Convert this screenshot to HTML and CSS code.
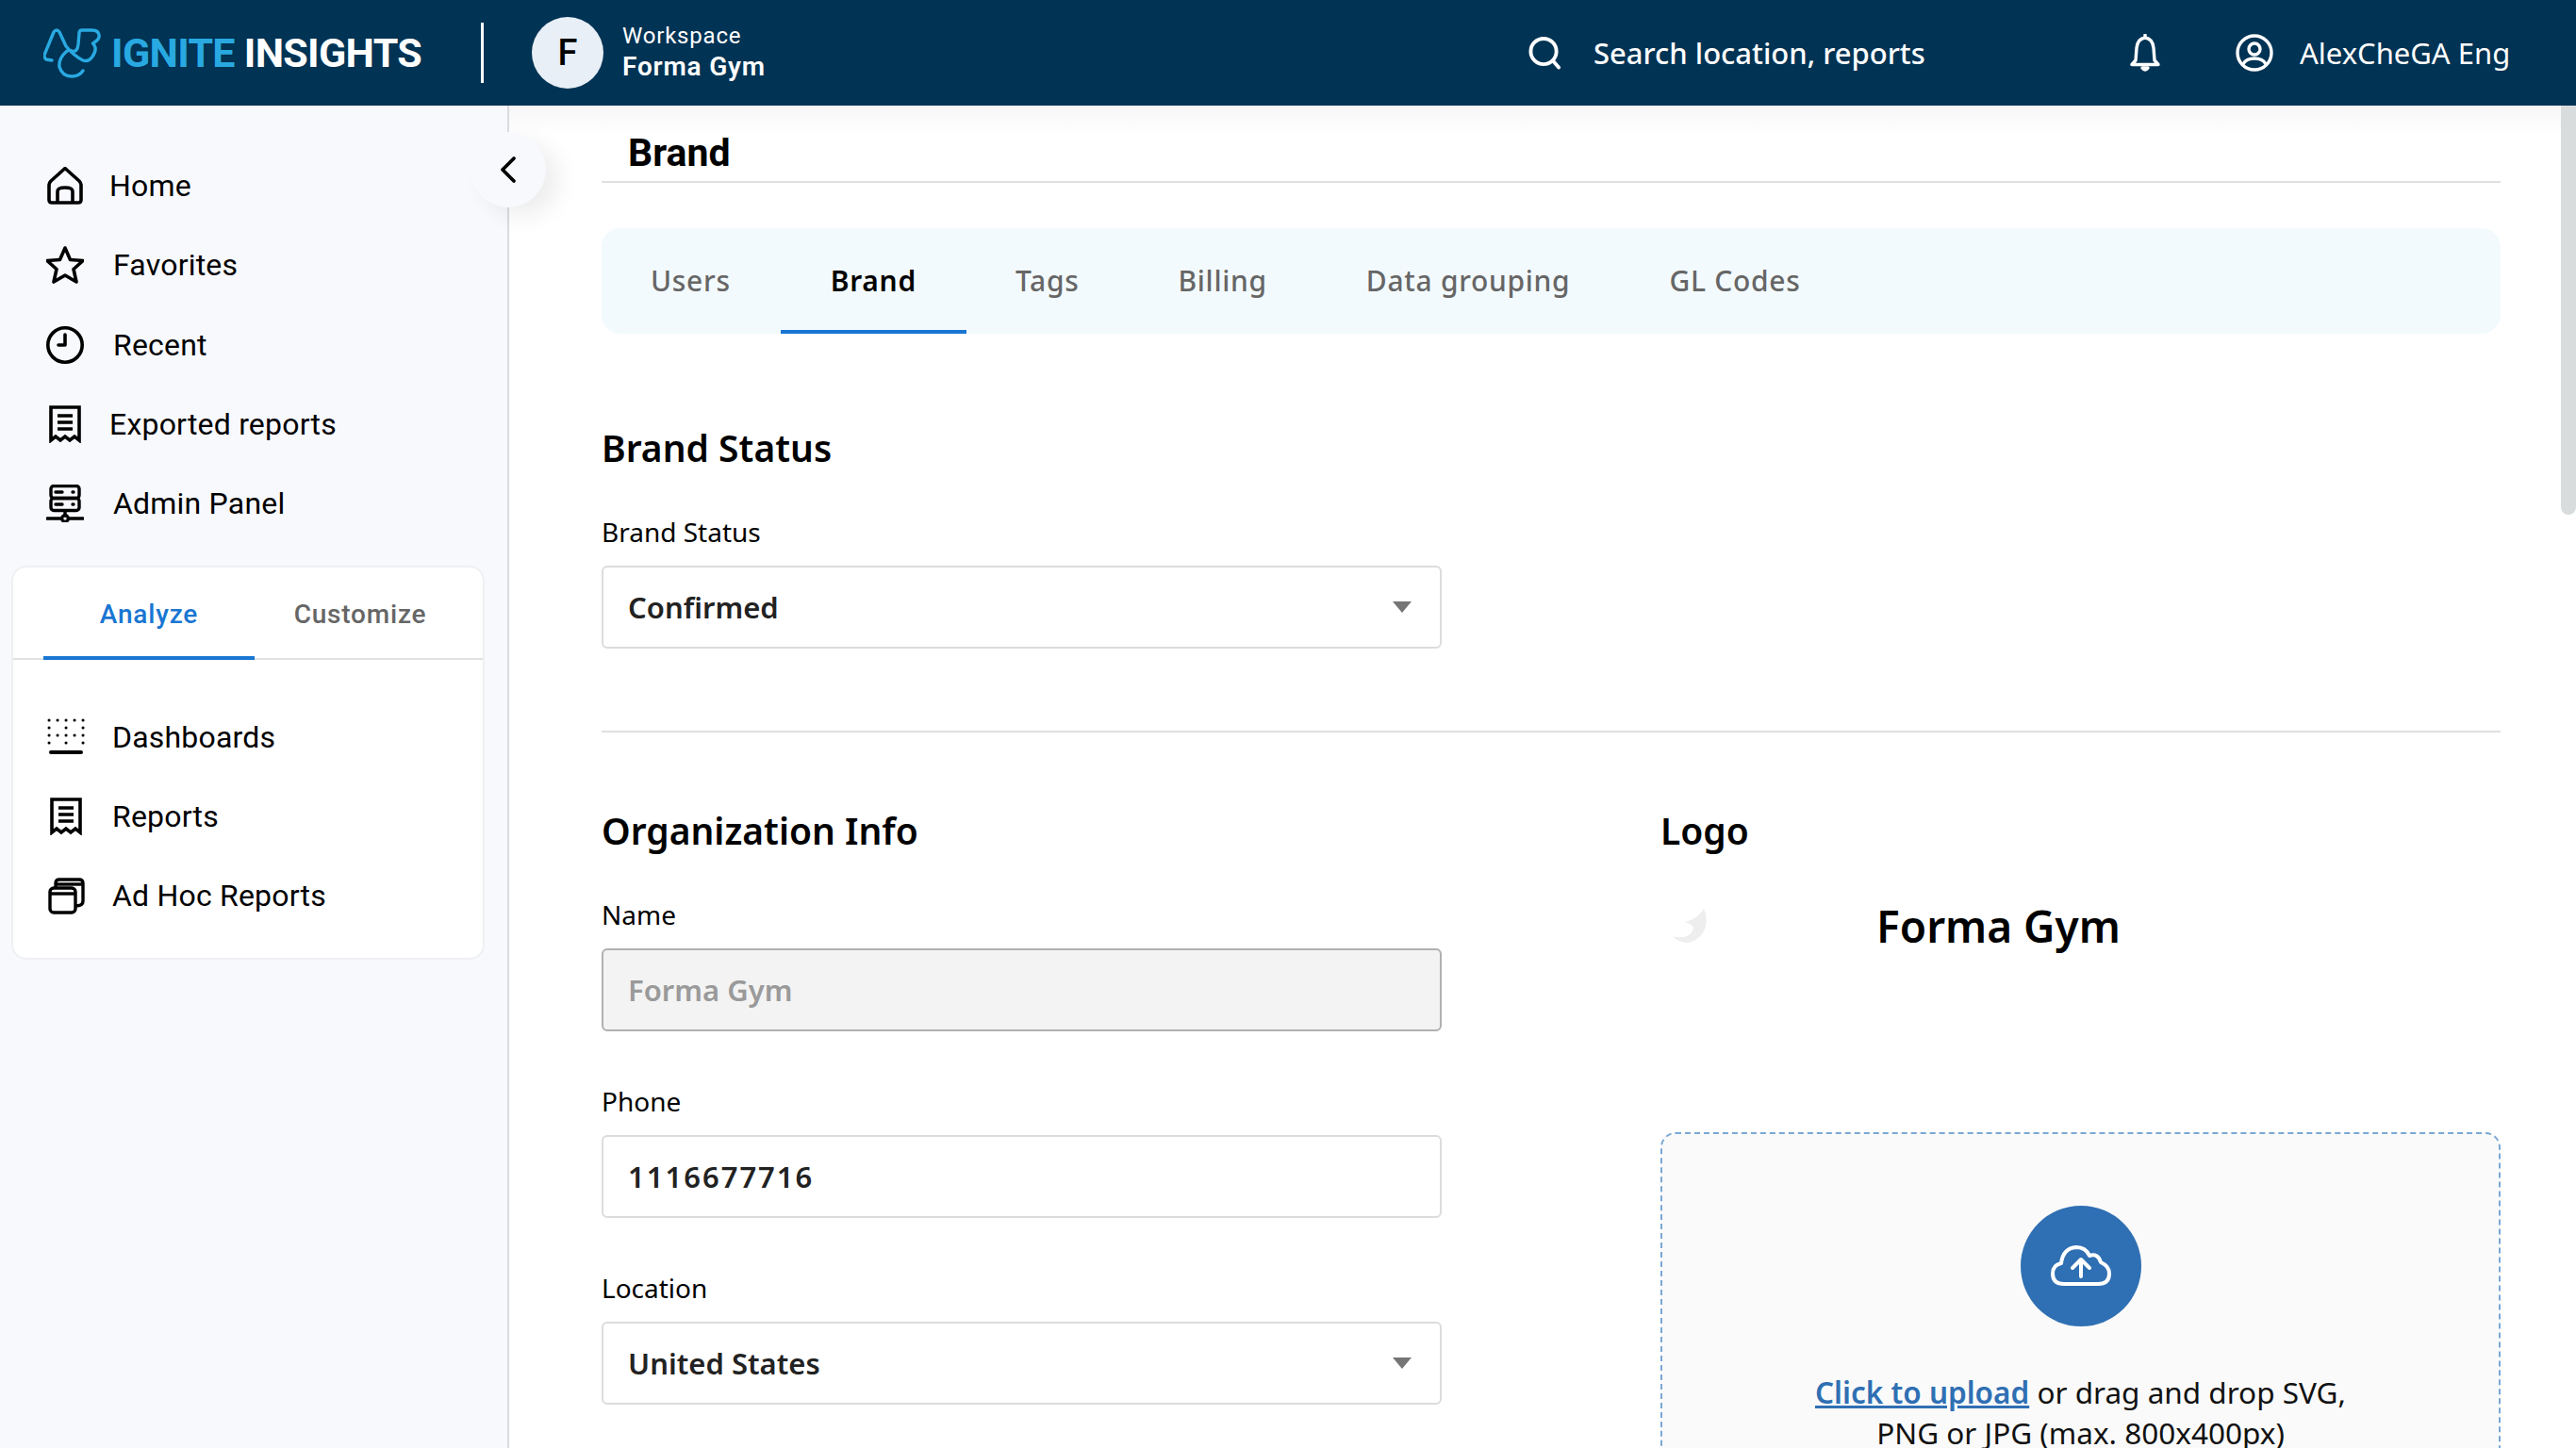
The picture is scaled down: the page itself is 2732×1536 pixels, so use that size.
FILE: index.html
```html
<!DOCTYPE html>
<html>
<head>
    <meta charset="utf-8" />
    <title>Brand</title>
    <link rel="stylesheet" href="styles.css">
</head>
<body>
    <header class="topbar">
        <div class="brand-logo">
            <svg class="logo-mark" viewBox="0 0 62 54" fill="none" stroke="#29a9e1" stroke-width="3.4" stroke-linecap="round" stroke-linejoin="round">
                <path d="M9 35 L3 34 Q0 32 1.5 28 L11 5 Q14 1 17 5 L24 20 Q32 30 42 35 Q48 37 52 31 Q57 24 54 19 L52.5 17 Q60 13 59 8 Q58 3 52 3 L41 3 Q38 3 38 6 L37 18 Q36 27 30 25 Q27 23 24 26 Q16 33 17 42 Q20 52 30 52 Q38 52 42 46"/>
            </svg>
            <span class="logo-text"><span class="logo-blue">IGNITE</span> INSIGHTS</span>
        </div>
        <div class="topbar-divider"></div>
        <div class="workspace">
            <div class="avatar">F</div>
            <div class="workspace-text">
                <div class="workspace-label">Workspace</div>
                <div class="workspace-name">Forma Gym</div>
            </div>
        </div>
        <div class="search">
            <svg class="search-icon" viewBox="0 0 36 36" fill="none" stroke="#fff" stroke-width="4" stroke-linecap="round">
                <circle cx="16.5" cy="16.5" r="14"/>
                <path d="M27 27 L33 34"/>
            </svg>
            <span>Search location, reports</span>
        </div>
        <svg class="bell-icon" viewBox="0 0 34 40" fill="none" stroke="#fff" stroke-width="3.4" stroke-linejoin="round">
            <path d="M17 4 Q9 5 8 15 L7 28 L3 32.5 L31 32.5 L27 28 L26 15 Q25 5 17 4 Z"/>
            <path d="M17 1 L17 4" stroke-linecap="round"/>
            <path d="M14 36 Q17 40 20 36 Z" fill="#fff"/>
        </svg>
        <div class="user">
            <svg class="user-icon" viewBox="0 0 40 40" fill="none" stroke="#fff" stroke-width="3.4">
                <circle cx="20" cy="20" r="18"/>
                <circle cx="20" cy="16" r="6"/>
                <path d="M8 32 Q11 26 20 26 Q29 26 32 32"/>
            </svg>
            <span>AlexCheGA Eng</span>
        </div>
    </header>

    <div class="layout">
        <aside class="sidebar">
            <button class="collapse">
                <svg viewBox="0 0 20 30" fill="none" stroke="#000" stroke-width="3.8" stroke-linecap="round" stroke-linejoin="round"><path d="M16 3 L4 15 L16 27"/></svg>
            </button>
            <nav class="main-nav">
                <a class="nav-item">
                    <svg class="nav-icon" viewBox="0 0 40 40" fill="none" stroke="#000" stroke-width="3.6" stroke-linejoin="round"><path d="M20 1.5 L5 15 Q3 17 3 19 L3 35 Q3 38 6 38 L34 38 Q37 38 37 35 L37 19 Q37 17 35 15 Z"/><path d="M12 38 L12 26 Q12 22 20 22 Q28 22 28 26 L28 38"/></svg>
                    <span class="t-near">Home</span>
                </a>
                <a class="nav-item">
                    <svg class="nav-icon" viewBox="0 0 40 40" fill="none" stroke="#000" stroke-width="3.6" stroke-linejoin="round"><path d="M20 2 L25.5 14.5 L39 15.5 L29 24.5 L32 38 L20 31 L8 38 L11 24.5 L1 15.5 L14.5 14.5 Z"/></svg>
                    <span>Favorites</span>
                </a>
                <a class="nav-item">
                    <svg class="nav-icon" viewBox="0 0 40 40" fill="none" stroke="#000" stroke-width="3.6" stroke-linecap="round" stroke-linejoin="round"><circle cx="20" cy="20" r="18.2"/><path d="M20 9 L20 20 L13 20"/></svg>
                    <span>Recent</span>
                </a>
                <a class="nav-item">
                    <svg class="nav-icon" viewBox="0 0 40 40"><use href="#receipt"/></svg>
                    <span class="t-near">Exported reports</span>
                </a>
                <a class="nav-item">
                    <svg class="nav-icon" viewBox="0 0 40 40" fill="none" stroke="#000" stroke-width="3.4" stroke-linecap="round">
                        <rect x="5" y="1.5" width="30" height="13" rx="3"/>
                        <rect x="5" y="14.5" width="30" height="13" rx="3"/>
                        <path d="M10 8 L17 8 M10 21 L17 21 M28 8 L29 8 M28 21 L29 21"/>
                        <path d="M20 28 L20 33 M1 36 L15 36 M25 36 L39 36"/>
                        <circle cx="20" cy="36" r="3.4"/>
                    </svg>
                    <span>Admin Panel</span>
                </a>
            </nav>
            <section class="side-card">
                <div class="side-tabs">
                    <div class="side-tab active">Analyze</div>
                    <div class="side-tab">Customize</div>
                </div>
                <div class="side-list">
                    <a class="nav-item">
                        <svg class="nav-icon" viewBox="0 0 40 40" fill="#000">
                            <g fill="none" stroke="#000" stroke-width="3" stroke-linecap="round">
                                <path d="M2 2 L38.1 2 M2 18 L38.1 18" stroke-dasharray="0.1 8.9"/>
                                <path d="M2 10 L38.1 10 M2 26 L38.1 26" stroke-dasharray="0.1 17.9"/>
                            </g>
                            <rect x="2" y="34" width="36" height="4" rx="2"/>
                        </svg>
                        <span>Dashboards</span>
                    </a>
                    <a class="nav-item">
                        <svg class="nav-icon" viewBox="0 0 40 40"><use href="#receipt"/></svg>
                        <span>Reports</span>
                    </a>
                    <a class="nav-item">
                        <svg class="nav-icon" viewBox="0 0 40 40" fill="none" stroke="#000" stroke-width="3.4" stroke-linejoin="round">
                            <rect x="3" y="12" width="27" height="26" rx="4"/>
                            <path d="M3 18 L30 18"/>
                            <path d="M9 12 L9 7 Q9 3 13 3 L34 3 Q38 3 38 7 L38 26 Q38 31 30 31"/>
                            <path d="M9 8 L38 8"/>
                        </svg>
                        <span>Ad Hoc Reports</span>
                    </a>
                </div>
            </section>
        </aside>

        <main class="content">
            <h1 class="page-title">Brand</h1>
            <div class="tabs">
                <div class="tab">Users</div>
                <div class="tab active">Brand</div>
                <div class="tab">Tags</div>
                <div class="tab">Billing</div>
                <div class="tab">Data grouping</div>
                <div class="tab">GL Codes</div>
            </div>

            <section class="status-section">
                <h2 class="section-title">Brand Status</h2>
                <label class="field-label">Brand Status</label>
                <div class="control half"><span>Confirmed</span><i class="caret"></i></div>
            </section>

            <section class="org-section">
                <div class="org-col">
                    <h2 class="section-title">Organization Info</h2>
                    <label class="field-label">Name</label>
                    <div class="control disabled"><span>Forma Gym</span></div>
                    <label class="field-label">Phone</label>
                    <div class="control"><span class="phone">1116677716</span></div>
                    <label class="field-label">Location</label>
                    <div class="control"><span>United States</span><i class="caret"></i></div>
                </div>
                <div class="org-col">
                    <h2 class="section-title">Logo</h2>
                    <div class="logo-preview">
                        <svg class="swoosh" viewBox="0 0 38 36" fill="#eeeeee"><path d="M35 0 Q39 8 37 18 Q33 33 18 36 Q8 36 2 29 Q12 32 19 28 Q24 24 24 19 Q20 15 15 14 Q28 11 35 0 Z"/></svg>
                        <span class="preview-name">Forma Gym</span>
                    </div>
                    <div class="dropzone">
                        <div class="upload-circle">
                            <svg viewBox="0 0 64 44" fill="none" stroke="#fff" stroke-width="4" stroke-linecap="round" stroke-linejoin="round">
                                <path d="M14 41 Q2 41 2 30 Q2 21 11 19 Q13 3 27 2 Q37 2 41 11 Q50 8 53 18 Q62 22 62 30 Q62 41 50 41 Z"/>
                                <path d="M32 33 L32 16 M23 24 L32 15 L41 24"/>
                            </svg>
                        </div>
                        <p class="upload-text"><a class="upload-link">Click to upload</a> or drag and drop SVG,<br>PNG or JPG (max. 800x400px)</p>
                    </div>
                </div>
            </section>
        </main>
        <div class="scroll-thumb"></div>
    </div>

    <svg class="defs" width="0" height="0">
        <symbol id="receipt" viewBox="0 0 40 40">
            <g fill="none" stroke="#000" stroke-width="3.6">
                <path d="M5 2 L35 2 L35 37 L30 33 L25 37 L20 33 L15 37 L10 33 L5 37 Z" stroke-linejoin="miter"/>
                <path d="M12 11 L28 11 M12 18 L28 18 M12 25 L28 25"/>
            </g>
        </symbol>
    </svg>
</body>
</html>
```

FILE: styles.css
```css
* {
    box-sizing: border-box;
}
html, body {
    margin: 0;
    height: 100%;
    overflow: hidden;
}
body {
    font-family: "Noto Sans", sans-serif;
    color: #000;
    background: #fff;
}
.defs {
    position: absolute;
}

/* top bar */
.topbar {
    height: 112px;
    background: #003354;
    color: #fff;
    display: flex;
    align-items: center;
    padding-left: 46px;
}
.brand-logo {
    display: flex;
    align-items: center;
    width: 464px;
    gap: 10px;
}
.logo-mark {
    width: 62px;
    height: 54px;
}
.logo-text {
    font-family: Roboto, sans-serif;
    font-weight: 700;
    font-size: 43px;
    letter-spacing: -0.7px;
    white-space: nowrap;
}
.logo-blue {
    color: #29a9e1;
}
.topbar-divider {
    width: 3px;
    height: 64px;
    background: #fff;
}
.workspace {
    display: flex;
    align-items: center;
    gap: 20px;
    margin-left: 51px;
    width: 1057px;
}
.avatar {
    width: 76px;
    height: 76px;
    border-radius: 50%;
    background: #e8eff6;
    color: #000;
    font-family: Roboto, sans-serif;
    font-weight: 500;
    font-size: 38px;
    display: flex;
    align-items: center;
    justify-content: center;
}
.workspace-label {
    font-family: Roboto, sans-serif;
    font-size: 24px;
    letter-spacing: 0.8px;
    line-height: 30px;
}
.workspace-name {
    font-family: Roboto, sans-serif;
    font-weight: 600;
    font-size: 28px;
    letter-spacing: 0.8px;
    line-height: 36px;
}
.search {
    display: flex;
    align-items: center;
    gap: 34px;
    font-weight: 500;
    font-size: 31px;
    width: 637px;
}
.search-icon {
    width: 35px;
    height: 36px;
}
.bell-icon {
    width: 34px;
    height: 40px;
}
.user {
    display: flex;
    align-items: center;
    gap: 28px;
    margin-left: 79px;
    font-size: 31px;
}
.user-icon {
    width: 40px;
    height: 40px;
}

.layout {
    display: flex;
    height: 1424px;
    position: relative;
}

/* sidebar */
.sidebar {
    width: 540px;
    flex: none;
    background: #f8f9fd;
    border-right: 2px solid #d9dbe0;
    padding: 0 26px 0 12px;
    position: relative;
}
.collapse {
    position: absolute;
    top: 28px;
    right: -41px;
    width: 80px;
    height: 80px;
    border: 0;
    border-radius: 50%;
    background: #f8f9fd;
    box-shadow: 14px 10px 24px rgba(0, 0, 0, 0.07);
    display: flex;
    align-items: center;
    justify-content: center;
    padding: 0;
    z-index: 2;
}
.collapse svg {
    width: 20px;
    height: 30px;
}
.main-nav {
    padding: 43px 0 24px;
}
.nav-item {
    display: flex;
    align-items: center;
    height: 84.3px;
    padding-left: 37px;
    gap: 31px;
    font-family: Roboto, sans-serif;
    font-size: 32px;
    letter-spacing: 0.2px;
    color: #000;
}
.nav-icon {
    width: 40px;
    height: 40px;
    flex: none;
}
.t-near {
    margin-left: -4px;
}

.side-card {
    background: #fff;
    border: 2px solid #eef0f3;
    border-radius: 16px;
    height: 418px;
    width: 502px;
}
.side-tabs {
    display: flex;
    height: 98px;
    padding-left: 32px;
    border-bottom: 2px solid #e0e0e0;
}
.side-tab {
    font-family: Roboto, sans-serif;
    font-weight: 500;
    font-size: 28px;
    letter-spacing: 0.8px;
    color: #666;
    width: 224px;
    text-align: center;
    line-height: 99px;
}
.side-tab.active {
    color: #1976d2;
    border-bottom: 4px solid #1976d2;
    height: 98px;
}
.side-list {
    padding-top: 39px;
}
.side-list .nav-item {
    padding-left: 36px;
    gap: 29px;
}

/* main */
.content {
    flex: 1;
    padding: 0 80px 0 98px;
    background: linear-gradient(#f6f6f6, #fff 30px);
    overflow: hidden;
}
.page-title {
    margin: 0;
    height: 82px;
    padding: 26px 0 0 28px;
    font-family: Roboto, sans-serif;
    font-weight: 700;
    font-size: 41px;
    line-height: 48px;
    border-bottom: 2px solid #e0e0e0;
}
.tabs {
    display: flex;
    height: 112px;
    margin-top: 48px;
    background: #f3fafd;
    border-radius: 20px;
}
.tab {
    padding: 0 53px 0 52px;
    height: 112px;
    line-height: 112px;
    font-size: 30px;
    font-weight: 500;
    letter-spacing: 0.7px;
    color: #666;
}
.tab.active {
    color: #000;
    font-weight: 600;
    padding: 0 53px;
    border-bottom: 4px solid #1976d2;
}
.section-title {
    margin: 0;
    font-size: 39px;
    font-weight: 600;
    line-height: 56px;
}
.status-section {
    padding-top: 93px;
    height: 423px;
    border-bottom: 2px solid #e0e0e0;
}
.field-label {
    display: block;
    margin-top: 43px;
    font-size: 28px;
    line-height: 36px;
}
.control {
    height: 88px;
    margin-top: 18px;
    margin-bottom: 56px;
    border: 2px solid #dcdcdc;
    border-radius: 6px;
    padding: 0 26px;
    display: flex;
    align-items: center;
    justify-content: space-between;
    font-size: 31px;
    font-weight: 600;
    color: #222;
}
.phone {
    letter-spacing: 2px;
}
.half {
    width: 891px;
}
.control.disabled {
    background: #f3f3f3;
    border-color: #b0b0b0;
    color: #9a9a9a;
}
.caret {
    width: 0;
    height: 0;
    border-left: 10px solid transparent;
    border-right: 10px solid transparent;
    border-top: 12px solid #757575;
    margin-right: 4px;
}
.org-section {
    display: grid;
    grid-template-columns: 891px 891px;
    column-gap: 232px;
    padding-top: 76px;
}
.org-col .field-label {
    margin-top: 0;
}
.org-col .section-title + .field-label {
    margin-top: 43px;
}
.logo-preview {
    display: flex;
    align-items: center;
    height: 70px;
    margin-top: 38px;
    padding-left: 11px;
}
.swoosh {
    width: 38px;
    height: 36px;
}
.preview-name {
    margin-left: 180px;
    font-size: 46px;
    font-weight: 600;
    line-height: 70px;
}
.dropzone {
    margin-top: 184px;
    height: 500px;
    background: #fafafa;
    border: 2px dashed #7aa8d4;
    border-radius: 16px;
    padding-top: 76px;
    text-align: center;
}
.upload-circle {
    width: 128px;
    height: 128px;
    margin: 0 auto;
    border-radius: 50%;
    background: #2f6fb3;
    display: flex;
    align-items: center;
    justify-content: center;
}
.upload-circle svg {
    width: 64px;
    height: 44px;
}
.upload-text {
    margin: 48px 0 0;
    font-size: 31.5px;
    line-height: 43px;
    color: #111;
}
.upload-link {
    color: #2f6fb3;
    font-weight: 600;
    text-decoration: underline;
}
.scroll-thumb {
    position: absolute;
    top: 0;
    right: 0;
    width: 16px;
    height: 434px;
    background: #d8dcdd;
    border-radius: 0 0 8px 8px;
}
```
